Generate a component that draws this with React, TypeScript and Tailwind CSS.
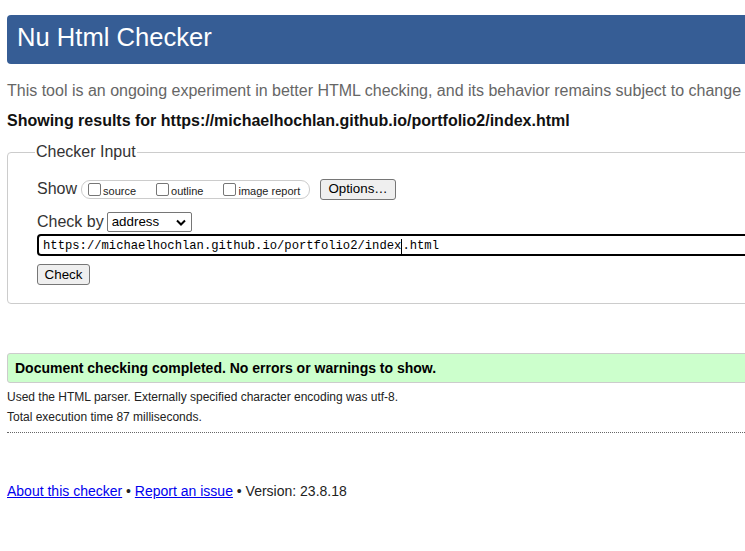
import React from "react";

const URL_TEXT = "https://michaelhochlan.github.io/portfolio2/index.html";

function Box({ label }: { label: string }) {
  return (
    <label className="flex items-center whitespace-nowrap">
      <span className="mr-[2px] h-[13px] w-[13px] rounded-[2px] border border-[#767676] bg-white" />
      <span className="pt-[3px] text-[11px] leading-[14px] text-[#222]">{label}</span>
    </label>
  );
}

export default function App() {
  return (
    <div className="h-[551px] w-full overflow-hidden bg-white font-['Liberation_Sans',Arial,sans-serif] text-[#222]">
      <div className="w-[1000px] px-[7px] pt-[15px]">
        {/* header bar */}
        <div className="flex h-[49px] items-center rounded-[4px] bg-[#365d95] pb-[3px] pl-[10px]">
          <h1 className="text-[25.6px] leading-none text-white">Nu Html Checker</h1>
        </div>

        <p className="mt-[18px] whitespace-nowrap text-[16px] leading-[18px] text-[#666]">
          This tool is an ongoing experiment in better HTML checking, and its behavior remains subject to change
        </p>
        <p className="mt-[12px] whitespace-nowrap text-[16px] font-bold leading-[18px] text-[#111]">
          Showing results for https://michaelhochlan.github.io/portfolio2/index.html
        </p>

        <fieldset className="mt-[13px] rounded-[4px] border border-[#ccc] pb-[17px] pl-[29px]">
          <legend className="-ml-[2px] px-[1px] text-[16px] leading-[18px] text-[#333]">Checker Input</legend>

          <div className="mt-[18px] flex h-[20px] items-center">
            <span className="text-[16px] leading-[18px] text-[#333]">Show</span>
            <div className="ml-[4px] flex h-[19px] w-[229px] items-center gap-[20px] rounded-[9px] border border-[#ccc] pl-[6px]">
              <Box label="source" />
              <Box label="outline" />
              <Box label="image report" />
            </div>
            <button className="ml-[10px] h-[21px] w-[76px] rounded-[3px] border border-[#767676] bg-[#efefef] text-[13.33px] leading-none text-black">
              Options…
            </button>
          </div>

          <div className="mt-[13px] flex h-[20px] items-center">
            <span className="text-[16px] leading-[18px] text-[#333]">Check by</span>
            <div className="ml-[3px] flex h-[20px] w-[85px] items-center justify-between rounded-[2px] border border-[#767676] bg-white pl-[4px] pr-[5px]">
              <span className="text-[13.33px] leading-none text-black">address</span>
              <svg width="10" height="7" viewBox="0 0 10 7">
                <path d="M1 1.5 L5 5.5 L9 1.5" fill="none" stroke="#000" strokeWidth="2" />
              </svg>
            </div>
          </div>

          <div className="mt-[2px] flex h-[22px] items-center rounded-[4px] border-2 border-black pl-[4px] pt-[2px]">
            <span className="font-['Liberation_Mono',monospace] text-[12.2px] leading-none text-black">
              {URL_TEXT.slice(0, 49)}
            </span>
            <span className="h-[15px] w-px bg-black" />
            <span className="font-['Liberation_Mono',monospace] text-[12.2px] leading-none text-black">
              {URL_TEXT.slice(49)}
            </span>
          </div>

          <button className="mt-[8px] h-[21px] w-[53px] rounded-[3px] border border-[#767676] bg-[#efefef] text-[13.33px] leading-none text-black">
            Check
          </button>
        </fieldset>

        <div className="mt-[49px] flex h-[30px] items-center rounded-l-[3px] border border-[#ccc] bg-[#ccffcc] pl-[7px]">
          <p className="text-[14px] font-bold leading-none text-black">
            Document checking completed. No errors or warnings to show.
          </p>
        </div>

        <p className="mt-[4px] text-[12px] leading-[20px] text-[#222]">
          Used the HTML parser. Externally specified character encoding was utf-8.
        </p>
        <p className="text-[12px] leading-[20px] text-[#222]">Total execution time 87 milliseconds.</p>
        <div className="mt-[5px] border-t border-dotted border-[#666]" />

        <p className="mt-[49px] text-[14px] leading-[18px] text-[#222]">
          <a href="#" className="text-[#0000ee] underline">About this checker</a> •{" "}
          <a href="#" className="text-[#0000ee] underline">Report an issue</a> • Version: 23.8.18
        </p>
      </div>
    </div>
  );
}
